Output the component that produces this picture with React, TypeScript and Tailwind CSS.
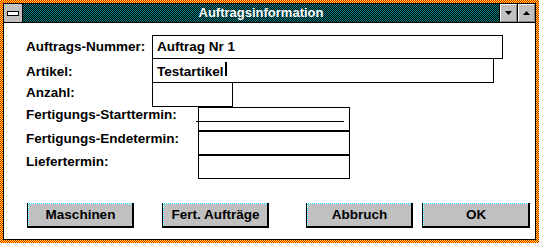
export default function App() {
  const font = "font-['Liberation_Sans',Arial,sans-serif]";
  const btn = (label: string, w: string, ml: string) => (
    <div className={`${w} ${ml} h-[25px] flex flex-col`}>
      <div className="flex flex-1 border-r-2 border-b-2 border-black border-l border-l-black">
        <div className="flex-1 flex flex-col bg-[image:repeating-conic-gradient(#00ffff_0%_25%,#ffffff_0%_50%)] bg-[length:2px_2px] pt-px pl-px">
          <div className="flex-1 bg-[#c0c0c0] flex items-center justify-center leading-[16px]">{label}</div>
        </div>
      </div>
    </div>
  );
  return (
    <div className={`w-[539px] h-[243px] p-[3px] bg-[image:repeating-conic-gradient(#ff0000_0%_25%,#ffff00_0%_50%)] bg-[length:2px_2px] ${font} font-bold text-[13.5px] leading-[16px] text-black`}>
      <div className="w-full h-full border border-black bg-white flex flex-col">
        {/* Title bar */}
        <div className="h-[19px] flex border-b border-black shrink-0">
          <div className="w-[19px] border-r border-black bg-[#c0c0c0] flex items-center justify-center">
            <div className="w-[12px] h-[5px] border border-black bg-white mr-px" />
          </div>
          <div className="flex-1 bg-[image:repeating-conic-gradient(#008080_0%_25%,#000000_0%_50%)] bg-[length:2px_2px] flex items-center justify-center text-white text-[13px] leading-[18px]">
            Auftragsinformation
          </div>
          <div className="w-[18px] border-l border-black bg-[#c0c0c0] flex">
            <div className="flex-1 border-t border-l border-white border-r border-b border-r-[#808080] border-b-[#808080] flex items-center justify-center">
              <svg width="7" height="4" viewBox="0 0 7 4"><polygon points="0,0 7,0 3.5,4" fill="#000" /></svg>
            </div>
          </div>
          <div className="w-[18px] border-l border-black bg-[#c0c0c0] flex">
            <div className="flex-1 border-t border-l border-white border-r border-b border-r-[#808080] border-b-[#808080] flex items-center justify-center">
              <svg width="7" height="4" viewBox="0 0 7 4"><polygon points="0,4 7,4 3.5,0" fill="#000" /></svg>
            </div>
          </div>
        </div>

        {/* Body */}
        <div className="flex flex-col pl-[22px] pt-[12px]">
          {/* Row 1 */}
          <div className="flex items-start h-[24px]">
            <div className="w-[126px] pt-[4px] whitespace-nowrap">Auftrags-Nummer:</div>
            <div className="w-[351px] h-[24px] border border-black pl-[4px] pt-[3px] whitespace-nowrap">Auftrag Nr 1</div>
          </div>
          {/* Row 2 */}
          <div className="flex items-start h-[25px] -mt-px">
            <div className="w-[126px] pt-[6px]">Artikel:</div>
            <div className="w-[342px] h-[25px] border border-black pl-[4px] pt-[5px] flex items-start">
              <span>Testartikel</span>
              <span className="inline-block w-[2px] h-[14px] bg-black ml-px -mt-[2px]" />
            </div>
          </div>
          {/* Row 3 */}
          <div className="flex items-start h-[25px] -mt-px">
            <div className="w-[126px] pt-[3px]">Anzahl:</div>
            <div className="w-[81px] h-[25px] border border-black" />
          </div>
          {/* Row 4 */}
          <div className="flex items-start h-[25px]">
            <div className="w-[172px] whitespace-nowrap">Fertigungs-Starttermin:</div>
            <div className="relative w-[152px] h-[25px] border border-black border-b-2">
              <div className="absolute left-[-3px] top-[13px] w-[148px] h-px bg-black" />
            </div>
          </div>
          {/* Row 5 */}
          <div className="flex items-start h-[24px]">
            <div className="w-[172px] -mt-px whitespace-nowrap">Fertigungs-Endetermin:</div>
            <div className="w-[152px] h-[24px] border-l border-r border-black border-b-2" />
          </div>
          {/* Row 6 */}
          <div className="flex items-start h-[23px]">
            <div className="w-[172px] -mt-[2px] whitespace-nowrap">Liefertermin:</div>
            <div className="w-[152px] h-[23px] border-l border-r border-b border-black" />
          </div>

          {/* Buttons */}
          <div className="flex mt-[24px] pl-px">
            {btn("Maschinen", "w-[107px]", "ml-0")}
            {btn("Fert. Aufträge", "w-[107px]", "ml-[28px]")}
            {btn("Abbruch", "w-[107px]", "ml-[37px]")}
            {btn("OK", "w-[108px]", "ml-[9px]")}
          </div>
        </div>
      </div>
    </div>
  );
}
